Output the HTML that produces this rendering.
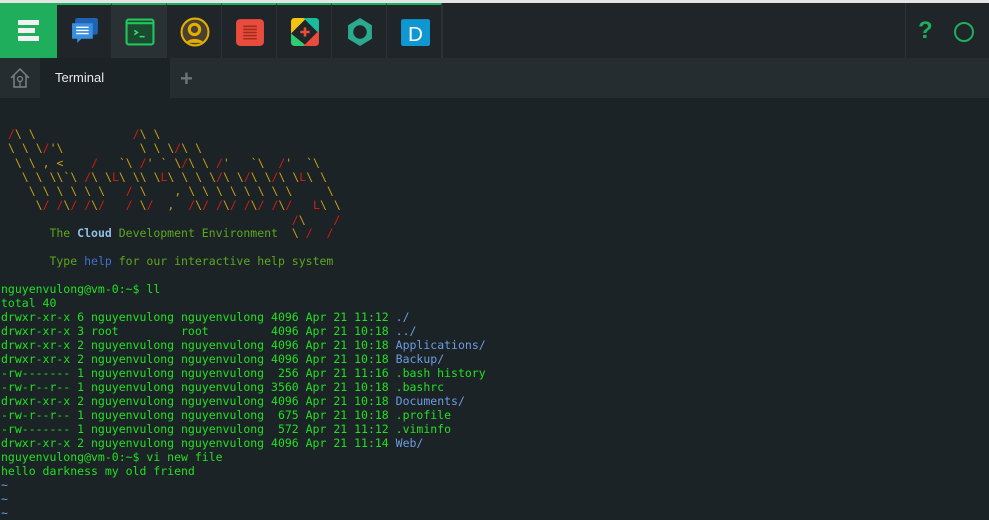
<!DOCTYPE html>
<html><head><meta charset="utf-8"><style>
*{margin:0;padding:0;box-sizing:border-box}
body{width:989px;height:518px;overflow:hidden;background:#1c2326;font-family:"Liberation Sans",sans-serif;position:relative}
.top{position:absolute;left:0;top:0;width:989px;height:58px;background:#1f2528;border-top:3px solid #e4e4e4}
.menu{position:absolute;left:0;top:0;width:57px;height:55px;background:#1fae5c}
.menu i{position:absolute;left:18px;height:5px;background:#f2f2f2;display:block}
.cell{position:absolute;top:0;width:55px;height:55px;border-right:1px solid #2b3236;border-top:2px solid #1fae5c}
.ic{position:absolute;left:13px;top:12px;width:30px;height:30px}
.bar2{position:absolute;left:0;top:58px;width:989px;height:40px;background:#262d31}
.tab{position:absolute;left:40px;top:0;width:130px;height:40px;background:#1c2326;color:#e8e8e8;font-size:13px;line-height:40px;padding-left:15px}
pre{position:absolute;left:1px;font-family:"DejaVu Sans Mono","Liberation Mono",monospace;font-size:11.5px;line-height:14px;color:#21e021;white-space:pre}
.b{color:#6d9de0}.y{color:#c8a010}.r{color:#d41a10}.g{color:#5ca81c}.c{color:#8fbde8;font-weight:bold}.h{color:#3f6fd0}
</style></head><body>
<div class="top">
 <div class="menu"><i style="top:17px;width:21px"></i><i style="top:25px;width:17px"></i><i style="top:33px;width:21px"></i></div>
 <div class="cell" style="left:57px"><svg class="ic" viewBox="0 0 29 29"><rect x="5" y="1" width="22" height="16" rx="2" fill="#1f63b5"/><path d="M2 6h20v15H11l-4 4v-4H2z" fill="#3a8fe0"/><path d="M6 10h12M6 13h12M6 16h12" stroke="#fff" stroke-width="1.3"/></svg></div>
 <div class="cell" style="left:112px;background:#2a3135"><svg class="ic" viewBox="0 0 29 29"><rect x="1.5" y="2.5" width="26" height="24" rx="2" fill="#1a4a30" stroke="#22c55e" stroke-width="2"/><path d="M2 6h25" stroke="#22c55e" stroke-width="2"/><path d="M9 13l3 2-3 2M14 19h5" stroke="#2fe070" stroke-width="1.5" fill="none"/></svg></div>
 <div class="cell" style="left:167px"><svg class="ic" viewBox="0 0 29 29"><circle cx="14.5" cy="14.5" r="13" fill="#4a3f30" stroke="#e0b000" stroke-width="2"/><circle cx="14" cy="12" r="5" fill="none" stroke="#e0b000" stroke-width="3"/><path d="M6 25c2-5 14-5 17 0" fill="#e0b000"/></svg></div>
 <div class="cell" style="left:222px"><svg class="ic" viewBox="0 0 29 29"><rect x="1" y="2" width="27" height="26" rx="4" fill="#e74c3c"/><path d="M8 9h13M8 12h13M8 15h13M8 18h13M8 21h13" stroke="#a52a1e" stroke-width="1.5"/></svg></div>
 <div class="cell" style="left:277px"><svg class="ic" viewBox="0 0 29 29"><path d="M1 4a3 3 0 013-3h12L1 16z" fill="#f1c40f"/><path d="M28 4v12L13 1h12a3 3 0 013 3z" fill="#1abc9c"/><path d="M1 16L16 28H4a3 3 0 01-3-3z" fill="#2ecc71"/><path d="M28 13v12a3 3 0 01-3 3H13z" fill="#e74c3c"/><circle cx="14.5" cy="14.5" r="8" fill="#1f2528"/><path d="M14.5 10v9M10 14.5h9" stroke="#e74c3c" stroke-width="2.5"/></svg></div>
 <div class="cell" style="left:332px"><svg class="ic" viewBox="0 0 29 29"><path d="M14.5 1L26 8v13L14.5 28 3 21V8z" fill="#2bab8e"/><circle cx="14.5" cy="14.5" r="6.5" fill="#1f2528"/></svg></div>
 <div class="cell" style="left:387px"><svg class="ic" viewBox="0 0 29 29"><rect x="1" y="2" width="28" height="26" rx="2" fill="#0e97d0"/><text x="15" y="23" font-family="Liberation Sans" font-size="20" fill="#fff" text-anchor="middle">D</text></svg></div>
 <div style="position:absolute;left:442px;top:0;width:1px;height:55px;background:#2b3236"></div>
 <div style="position:absolute;left:905px;top:0;width:1px;height:55px;background:#2b3236"></div>
 <div style="position:absolute;left:918px;top:14px;color:#1fae5c;font-weight:bold;font-size:24px">?</div>
 <div style="position:absolute;left:954px;top:19px;width:20px;height:20px;border:2px solid #1fae5c;border-radius:50%"></div>
</div>
<div class="bar2">
 <svg style="position:absolute;left:9px;top:9px" width="22" height="22" viewBox="0 0 22 22"><path d="M2 11L11 2l9 9M5 8v12h12V8" fill="none" stroke="#7a8288" stroke-width="1.5"/><circle cx="11" cy="12" r="2.5" fill="none" stroke="#7a8288" stroke-width="1.3"/><path d="M11 14.5V20" stroke="#7a8288" stroke-width="1.3"/></svg>
 <div class="tab">Terminal</div>
 <div style="position:absolute;left:180px;top:8px;color:#6d7479;font-size:22px;font-weight:bold">+</div>
</div>
<pre id="art" style="top:127px;line-height:14.3px"> /\ \              /\ \
 \ \ \/'\           \ \ \/\ \
  \ \ , &lt;    /   `\ /' ` \/\ \ /'   `\  /'  `\
   \ \ \\`\ /\ \L\ \\ \L\ \ \ \/\ \/\ \/\ \L\ \
    \ \ \ \ \ \   / \    , \ \ \ \ \ \ \ \     \
     \/ /\/ /\/   / \/  ,  /\/ /\/ /\/ /\/   L\ \
                                          /\    /</pre>
<pre style="top:226px"><span class="g">       The </span><span class="c">Cloud</span><span class="g"> Development Environment</span>  <span class="art2">\ /  /</span>

<span class="g">       Type </span><span class="h">help</span><span class="g"> for our interactive help system</span></pre>
<pre style="top:282px">nguyenvulong@vm-0:~$ ll
total 40
drwxr-xr-x 6 nguyenvulong nguyenvulong 4096 Apr 21 11:12 <span class="b">./</span>
drwxr-xr-x 3 root         root         4096 Apr 21 10:18 <span class="b">../</span>
drwxr-xr-x 2 nguyenvulong nguyenvulong 4096 Apr 21 10:18 <span class="b">Applications/</span>
drwxr-xr-x 2 nguyenvulong nguyenvulong 4096 Apr 21 10:18 <span class="b">Backup/</span>
-rw------- 1 nguyenvulong nguyenvulong  256 Apr 21 11:16 .bash history
-rw-r--r-- 1 nguyenvulong nguyenvulong 3560 Apr 21 10:18 .bashrc
drwxr-xr-x 2 nguyenvulong nguyenvulong 4096 Apr 21 10:18 <span class="b">Documents/</span>
-rw-r--r-- 1 nguyenvulong nguyenvulong  675 Apr 21 10:18 .profile
-rw------- 1 nguyenvulong nguyenvulong  572 Apr 21 11:12 .viminfo
drwxr-xr-x 2 nguyenvulong nguyenvulong 4096 Apr 21 11:14 <span class="b">Web/</span>
nguyenvulong@vm-0:~$ vi new file
hello darkness my old friend
<span class="b">~
~
~</span></pre>
<script>
function col(el){var t=el.textContent,h='';for(var i=0;i<t.length;i++){var ch=t[i];var e=ch=='<'?'&lt;':ch;if(ch=='/'||ch=='L')h+='<span class="r">'+e+'</span>';else if(ch==' '||ch=='\n')h+=ch;else h+='<span class="y">'+e+'</span>';}el.innerHTML=h;}
col(document.getElementById('art'));document.querySelectorAll('.art2').forEach(col);
</script>
</body></html>
